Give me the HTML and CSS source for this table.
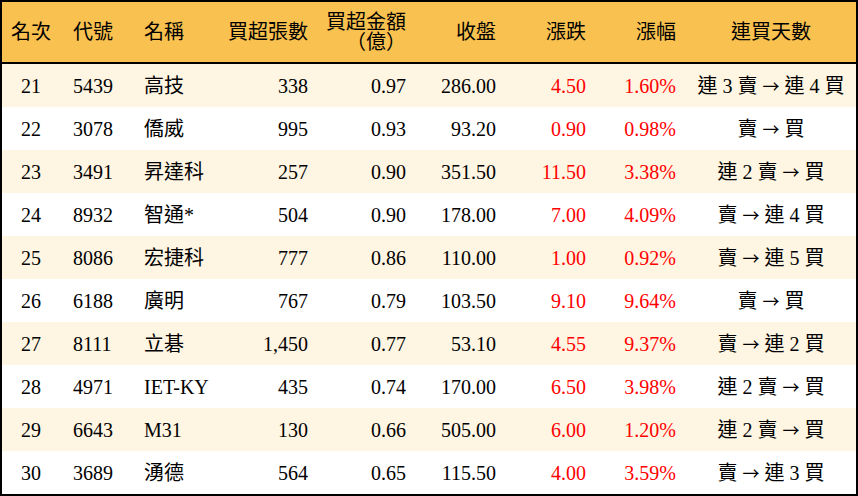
FILE: index.html
```html
<!DOCTYPE html>
<html lang="zh-Hant">
<head>
<meta charset="utf-8">
<title>買超排行</title>
<link rel="stylesheet" href="styles.css">
</head>
<body>
<div class="board">
  <div class="row head">
    <div class="c c1">名次</div>
    <div class="c c2">代號</div>
    <div class="c c3">名稱</div>
    <div class="c c4">買超張數</div>
    <div class="c c5 two">買超金額<br>（億）</div>
    <div class="c c6">收盤</div>
    <div class="c c7">漲跌</div>
    <div class="c c8">漲幅</div>
    <div class="c c9">連買天數</div>
  </div>
  <div class="row odd">
    <div class="c c1">21</div><div class="c c2">5439</div><div class="c c3">高技</div><div class="c c4">338</div><div class="c c5">0.97</div><div class="c c6">286.00</div><div class="c c7 up">4.50</div><div class="c c8 up">1.60%</div><div class="c c9">連 3 賣 <span class="arr">→</span> 連 4 買</div>
  </div>
  <div class="row">
    <div class="c c1">22</div><div class="c c2">3078</div><div class="c c3">僑威</div><div class="c c4">995</div><div class="c c5">0.93</div><div class="c c6">93.20</div><div class="c c7 up">0.90</div><div class="c c8 up">0.98%</div><div class="c c9">賣 <span class="arr">→</span> 買</div>
  </div>
  <div class="row odd">
    <div class="c c1">23</div><div class="c c2">3491</div><div class="c c3">昇達科</div><div class="c c4">257</div><div class="c c5">0.90</div><div class="c c6">351.50</div><div class="c c7 up">11.50</div><div class="c c8 up">3.38%</div><div class="c c9">連 2 賣 <span class="arr">→</span> 買</div>
  </div>
  <div class="row">
    <div class="c c1">24</div><div class="c c2">8932</div><div class="c c3">智通*</div><div class="c c4">504</div><div class="c c5">0.90</div><div class="c c6">178.00</div><div class="c c7 up">7.00</div><div class="c c8 up">4.09%</div><div class="c c9">賣 <span class="arr">→</span> 連 4 買</div>
  </div>
  <div class="row odd">
    <div class="c c1">25</div><div class="c c2">8086</div><div class="c c3">宏捷科</div><div class="c c4">777</div><div class="c c5">0.86</div><div class="c c6">110.00</div><div class="c c7 up">1.00</div><div class="c c8 up">0.92%</div><div class="c c9">賣 <span class="arr">→</span> 連 5 買</div>
  </div>
  <div class="row">
    <div class="c c1">26</div><div class="c c2">6188</div><div class="c c3">廣明</div><div class="c c4">767</div><div class="c c5">0.79</div><div class="c c6">103.50</div><div class="c c7 up">9.10</div><div class="c c8 up">9.64%</div><div class="c c9">賣 <span class="arr">→</span> 買</div>
  </div>
  <div class="row odd">
    <div class="c c1">27</div><div class="c c2">8111</div><div class="c c3">立碁</div><div class="c c4">1,450</div><div class="c c5">0.77</div><div class="c c6">53.10</div><div class="c c7 up">4.55</div><div class="c c8 up">9.37%</div><div class="c c9">賣 <span class="arr">→</span> 連 2 買</div>
  </div>
  <div class="row">
    <div class="c c1">28</div><div class="c c2">4971</div><div class="c c3">IET-KY</div><div class="c c4">435</div><div class="c c5">0.74</div><div class="c c6">170.00</div><div class="c c7 up">6.50</div><div class="c c8 up">3.98%</div><div class="c c9">連 2 賣 <span class="arr">→</span> 買</div>
  </div>
  <div class="row odd">
    <div class="c c1">29</div><div class="c c2">6643</div><div class="c c3">M31</div><div class="c c4">130</div><div class="c c5">0.66</div><div class="c c6">505.00</div><div class="c c7 up">6.00</div><div class="c c8 up">1.20%</div><div class="c c9">連 2 賣 <span class="arr">→</span> 買</div>
  </div>
  <div class="row">
    <div class="c c1">30</div><div class="c c2">3689</div><div class="c c3">湧德</div><div class="c c4">564</div><div class="c c5">0.65</div><div class="c c6">115.50</div><div class="c c7 up">4.00</div><div class="c c8 up">3.59%</div><div class="c c9">賣 <span class="arr">→</span> 連 3 買</div>
  </div>
</div>
</body>
</html>
```

FILE: styles.css
```css
html, body {
  margin: 0;
  padding: 0;
  background: #ffffff;
}

body {
  font-family: "Liberation Serif", "Noto Sans CJK TC", serif;
  font-size: 20px;
  color: #000000;
}

.board {
  width: 858px;
  height: 496px;
  box-sizing: border-box;
  border: 2px solid #000000;
  display: flex;
  flex-direction: column;
  background: #ffffff;
}

.row {
  display: grid;
  grid-template-columns: 58px 70px 90px 98px 98px 90px 90px 90px 170px;
  height: 43px;
  align-items: center;
  white-space: nowrap;
}

.row.odd {
  background: #fef5e2;
}

.row.head {
  height: 60px;
  background: #f9c14f;
  border-bottom: 2px solid #000000;
}

.c {
  line-height: 22px;
}

.c1 { text-align: center; }
.c2 { text-align: left; padding-left: 13px; }
.c3 { text-align: left; padding-left: 14px; }
.c4, .c5, .c6, .c7, .c8 { text-align: right; padding-right: 10px; }
.c9 { text-align: center; }

.two {
  line-height: 20px;
}

.arr {
  font-family: "Noto Sans CJK TC", sans-serif;
  font-size: 17px;
  line-height: 0;
}

.up {
  color: #ff0000;
}
```
